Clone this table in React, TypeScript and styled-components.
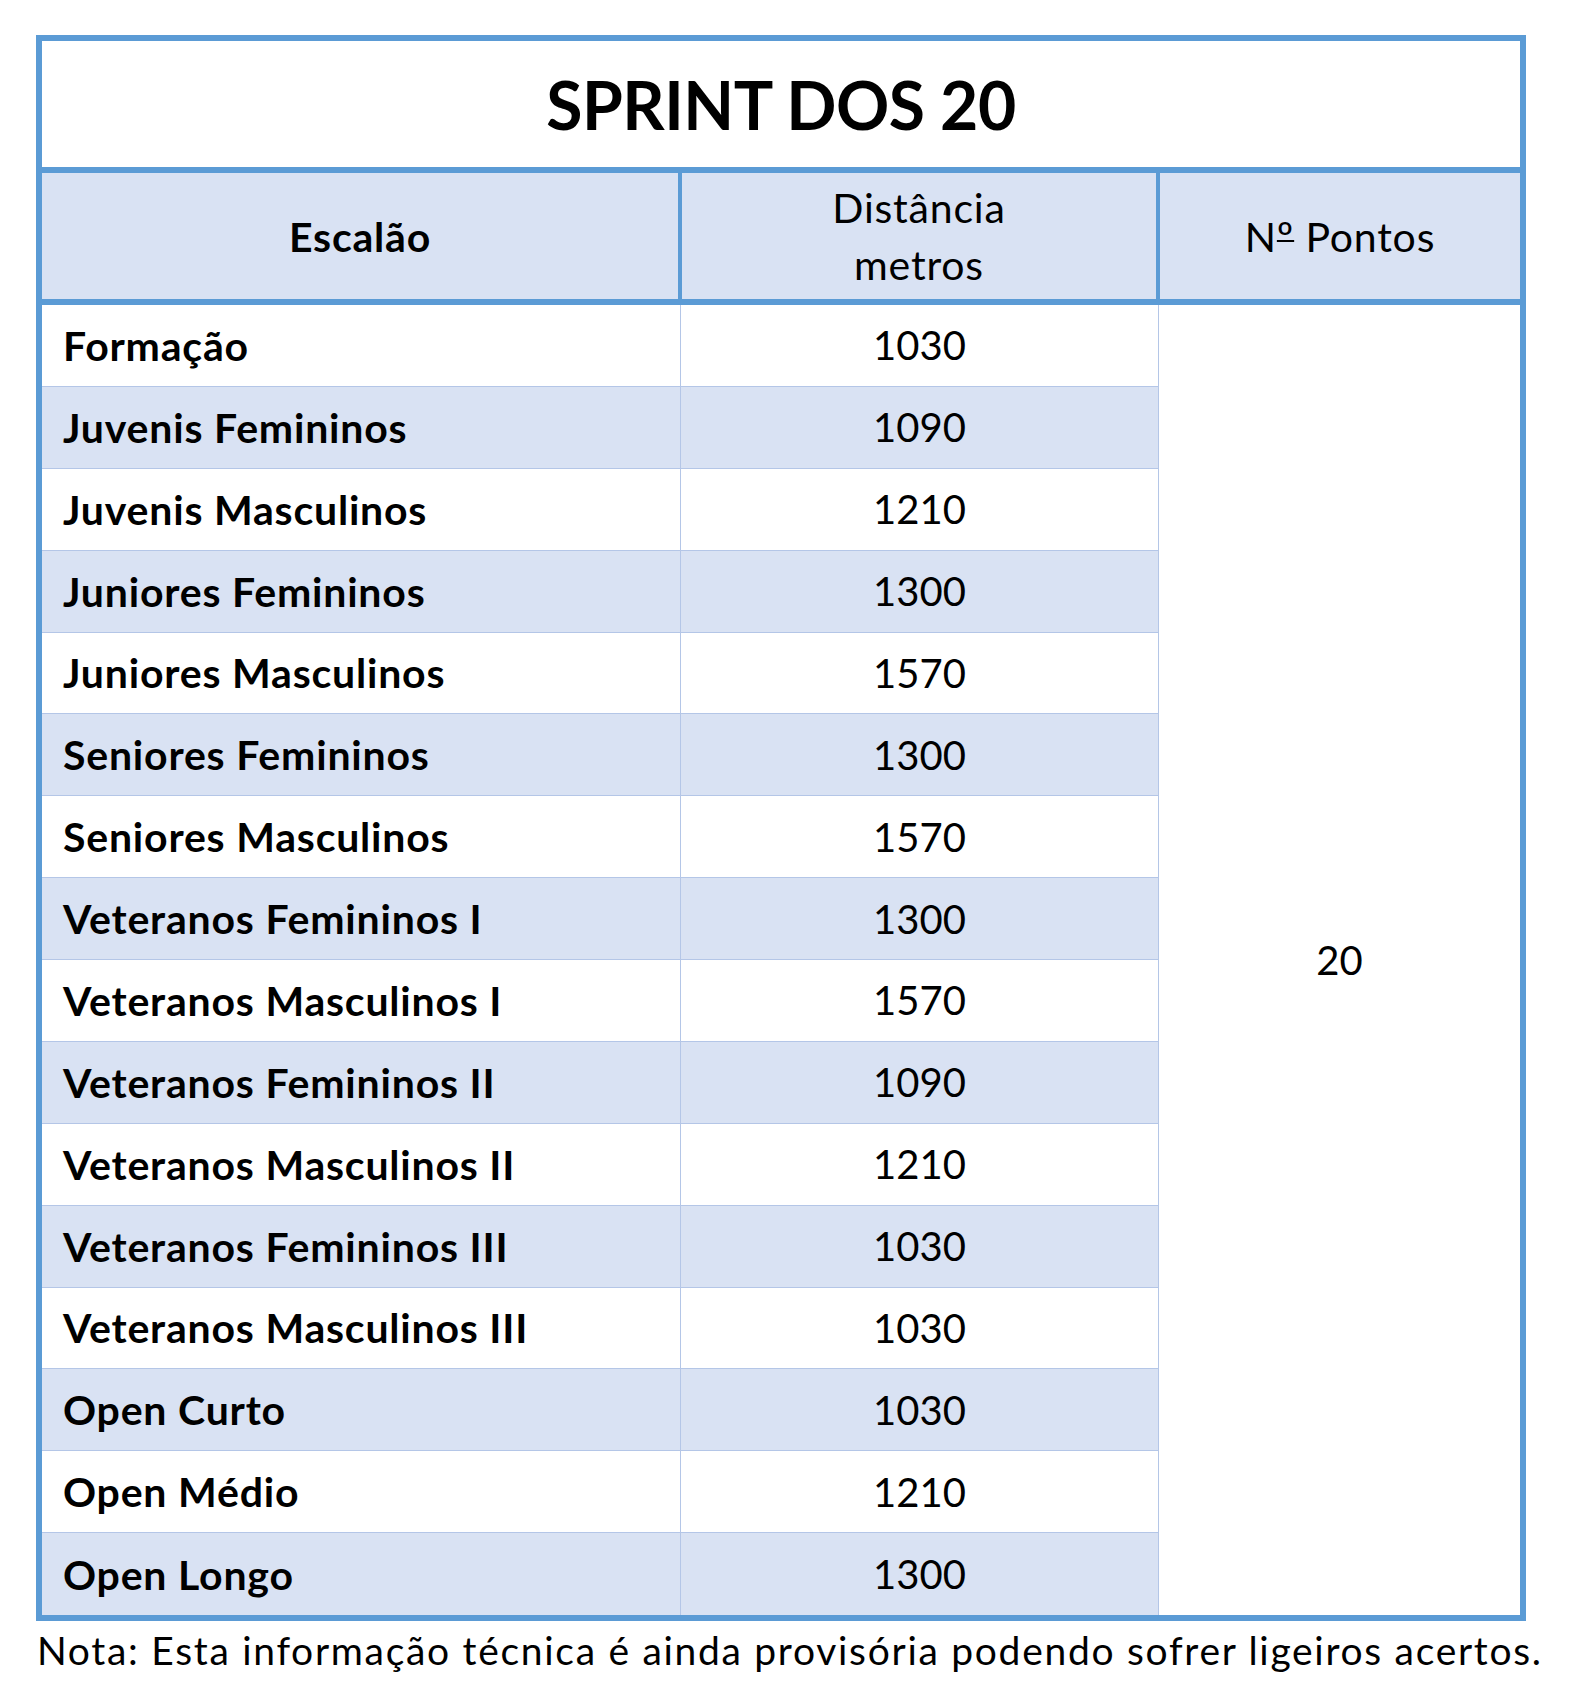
import styled, { createGlobalStyle } from "styled-components";

const colors = {
  frame: "#5b9bd5",
  band: "#d9e2f3",
  line: "#b4c6e7",
  text: "#000000",
};

const rows: { name: string; distance: string }[] = [
  { name: "Formação", distance: "1030" },
  { name: "Juvenis Femininos", distance: "1090" },
  { name: "Juvenis Masculinos", distance: "1210" },
  { name: "Juniores Femininos", distance: "1300" },
  { name: "Juniores Masculinos", distance: "1570" },
  { name: "Seniores Femininos", distance: "1300" },
  { name: "Seniores Masculinos", distance: "1570" },
  { name: "Veteranos Femininos I", distance: "1300" },
  { name: "Veteranos Masculinos I", distance: "1570" },
  { name: "Veteranos Femininos II", distance: "1090" },
  { name: "Veteranos Masculinos II", distance: "1210" },
  { name: "Veteranos Femininos III", distance: "1030" },
  { name: "Veteranos Masculinos III", distance: "1030" },
  { name: "Open Curto", distance: "1030" },
  { name: "Open Médio", distance: "1210" },
  { name: "Open Longo", distance: "1300" },
];

const GlobalStyle = createGlobalStyle`
  html, body {
    margin: 0;
    padding: 0;
    background: #ffffff;
  }
  body {
    font-family: Lato, "Open Sans", sans-serif;
    color: ${colors.text};
  }
`;

const Page = styled.div`
  padding: 35px 0 0 36px;
  width: 1490px;
`;

const Frame = styled.div`
  border: 6px solid ${colors.frame};
  display: flex;
  flex-direction: column;
`;

const Title = styled.h1`
  margin: 0;
  height: 126px;
  display: flex;
  align-items: center;
  justify-content: center;
  font-size: 66px;
  font-weight: 700;
  letter-spacing: -0.5px;
  border-bottom: 6px solid ${colors.frame};
`;

const HeaderRow = styled.div`
  display: grid;
  grid-template-columns: 640px 478px 1fr;
  height: 126px;
  background: ${colors.band};
  border-bottom: 6px solid ${colors.frame};
`;

const HeadCell = styled.div<{ $bold?: boolean; $last?: boolean }>`
  display: flex;
  align-items: center;
  justify-content: center;
  text-align: center;
  font-size: 41px;
  line-height: 57px;
  letter-spacing: 0.8px;
  font-weight: ${(p) => (p.$bold ? 700 : 400)};
  border-right: ${(p) => (p.$last ? "none" : `4px solid ${colors.frame}`)};
`;

const HeadText = styled.span`
  white-space: pre;
`;

const Ordinal = styled.span`
  text-decoration: underline;
  text-decoration-thickness: 2px;
  text-underline-offset: -0.3em;
  text-decoration-skip-ink: none;
`;

const Body = styled.div`
  display: grid;
  grid-template-columns: 639px 478px 1fr;
  grid-template-rows: repeat(16, 1fr);
  height: 1310px;
`;

const Cell = styled.div<{ $shaded: boolean; $last: boolean; $center?: boolean }>`
  display: flex;
  align-items: center;
  justify-content: ${(p) => (p.$center ? "center" : "flex-start")};
  padding-left: ${(p) => (p.$center ? "0" : "21px")};
  background: ${(p) => (p.$shaded ? colors.band : "#ffffff")};
  border-right: 1px solid ${colors.line};
  border-bottom: ${(p) => (p.$last ? "none" : `1px solid ${colors.line}`)};
  font-size: ${(p) => (p.$center ? "40px" : "41px")};
  letter-spacing: ${(p) => (p.$center ? "0" : "0.8px")};
  font-weight: ${(p) => (p.$center ? 400 : 700)};
`;

const PointsCell = styled.div`
  grid-column: 3;
  grid-row: 1 / -1;
  display: flex;
  align-items: center;
  justify-content: center;
  font-size: 40px;
  background: #ffffff;
`;

const Note = styled.p`
  margin: 6px 0 0 1px;
  font-size: 39px;
  line-height: 46px;
  letter-spacing: 1.7px;
  white-space: nowrap;
`;

export default function App() {
  return (
    <Page>
      <GlobalStyle />
      <Frame>
        <Title>SPRINT DOS 20</Title>
        <HeaderRow>
          <HeadCell $bold>Escalão</HeadCell>
          <HeadCell>
            Distância
            <br />
            metros
          </HeadCell>
          <HeadCell $last>
            <HeadText>
              N<Ordinal>º</Ordinal>{" Pontos"}
            </HeadText>
          </HeadCell>
        </HeaderRow>
        <Body>
          {rows.map((r, i) => {
            const shaded = i % 2 === 1;
            const last = i === rows.length - 1;
            return [
              <Cell
                key={`n${i}`}
                $shaded={shaded}
                $last={last}
                style={{ gridRow: i + 1, gridColumn: 1 }}
              >
                {r.name}
              </Cell>,
              <Cell
                key={`d${i}`}
                $shaded={shaded}
                $last={last}
                $center
                style={{ gridRow: i + 1, gridColumn: 2 }}
              >
                {r.distance}
              </Cell>,
            ];
          })}
          <PointsCell>20</PointsCell>
        </Body>
      </Frame>
      <Note>
        Nota: Esta informação técnica é ainda provisória podendo sofrer ligeiros acertos.
      </Note>
    </Page>
  );
}
